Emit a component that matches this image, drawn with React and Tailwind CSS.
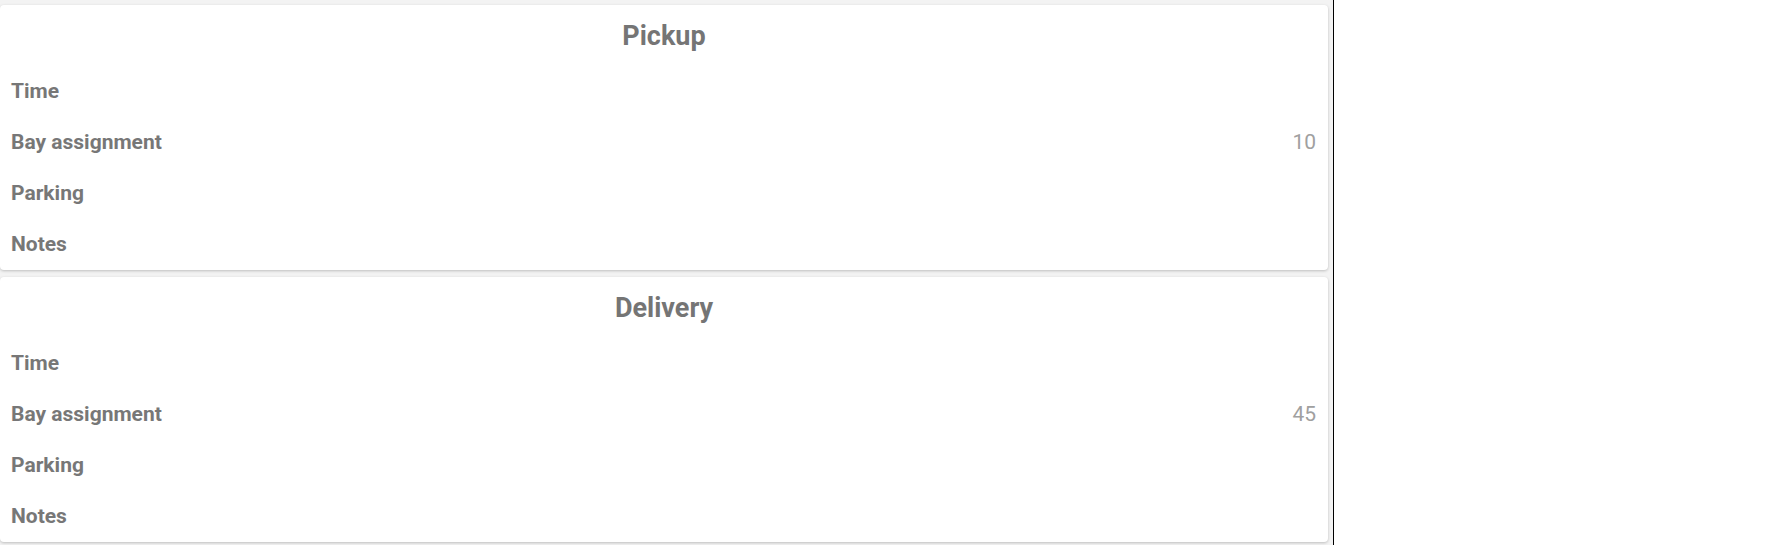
export default function App() {
  const sections = [
    { title: "Pickup", bay: "10" },
    { title: "Delivery", bay: "45" },
  ];
  return (
    <div className="w-[1334px] h-[545px] bg-[#f3f3f3] border-r border-black pt-[5px] flex flex-col gap-[7px] font-['Roboto',sans-serif]">
      {sections.map((s) => (
        <div
          key={s.title}
          className="w-[1328px] bg-white rounded-[4px] shadow-[0_1px_3px_rgba(0,0,0,0.22)] pt-[13px]"
        >
          <div className="h-[36px] flex items-center justify-center text-[27px] font-bold text-[#757575]">
            {s.title}
          </div>
          <div className="mt-[12px] flex flex-col">
            {[
              ["Time", ""],
              ["Bay assignment", s.bay],
              ["Parking", ""],
              ["Notes", ""],
            ].map(([label, value]) => (
              <div key={label} className="h-[51px] flex items-center justify-between pl-[11px] pr-[12px]">
                <span className="text-[21px] font-bold text-[#777777]">{label}</span>
                <span className="text-[21px] text-[#a0a0a0]">{value}</span>
              </div>
            ))}
          </div>
        </div>
      ))}
    </div>
  );
}
